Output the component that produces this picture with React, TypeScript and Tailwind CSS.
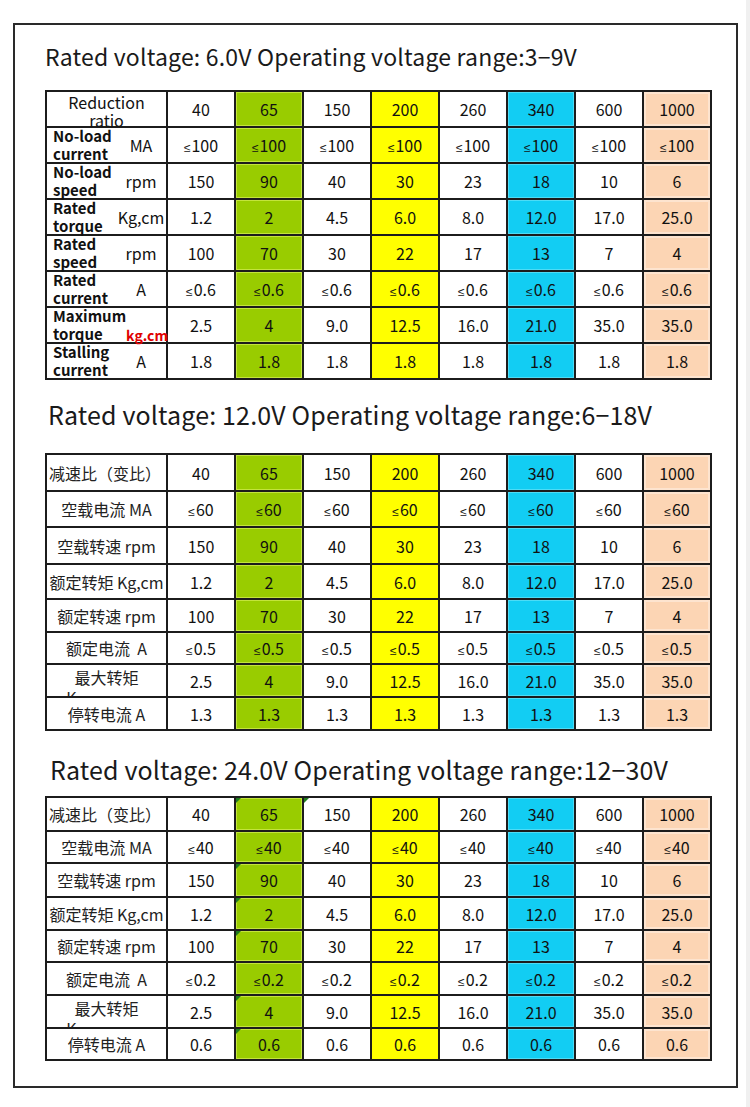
import React from "react";

const cols = ["40", "65", "150", "200", "260", "340", "600", "1000"];

// column fills, written out in full so tailwind picks them up
const colCls = [
  "bg-white",
  "bg-[#99cc00] shadow-[inset_0_0_0_1px_#c4e43c]",
  "bg-white",
  "bg-[#ffff00]",
  "bg-white",
  "bg-[#12cdf3] shadow-[inset_0_0_0_1px_#4ddcf6]",
  "bg-white",
  "bg-[#fcd5b4] shadow-[inset_0_0_0_2px_#fde4cf]",
];

const body = (cur: string, amp: string, stall: string) => [
  cols,
  Array(8).fill(cur),
  ["150", "90", "40", "30", "23", "18", "10", "6"],
  ["1.2", "2", "4.5", "6.0", "8.0", "12.0", "17.0", "25.0"],
  ["100", "70", "30", "22", "17", "13", "7", "4"],
  Array(8).fill(amp),
  ["2.5", "4", "9.0", "12.5", "16.0", "21.0", "35.0", "35.0"],
  Array(8).fill(stall),
];

// the "≤" in the picture is a small narrow glyph, not the full-width CJK one
const Val = ({ v }: { v: string }) =>
  v.startsWith("≤") ? (
    <span>
      <span className="font-['Liberation_Sans',sans-serif] text-[12px] mr-[1px]">≤</span>
      {v.slice(1)}
    </span>
  ) : (
    <span>{v}</span>
  );

const EnLabel = ({ a, b, unit, red }: { a: string; b: string; unit?: string; red?: boolean }) => (
  <div className="relative h-full flex items-center pl-[6px]">
    <div className="font-bold text-[15px] leading-[18px] text-[#111]">
      <div>{a}</div>
      <div>{b}</div>
    </div>
    {unit && !red && (
      <span className="absolute right-0 w-[50px] text-center text-[16px] text-[#111]">{unit}</span>
    )}
    {red && (
      <span className="absolute right-[-2px] bottom-[-4px] font-bold text-[14px] text-[#e00000]">kg.cm</span>
    )}
  </div>
);

const enLabels = [
  <div className="h-full flex items-start justify-center pt-[1px] text-[16px] leading-[18px] text-[#111] text-center">
    Reduction
    <br />
    ratio
  </div>,
  <EnLabel a="No-load" b="current" unit="MA" />,
  <EnLabel a="No-load" b="speed" unit="rpm" />,
  <EnLabel a="Rated" b="torque" unit="Kg,cm" />,
  <EnLabel a="Rated" b="speed" unit="rpm" />,
  <EnLabel a="Rated" b="current" unit="A" />,
  <EnLabel a="Maximum" b="torque" red />,
  <EnLabel a="Stalling" b="current" unit="A" />,
];

const cnText = ["减速比（变比）", "空载电流 MA", "空载转速 rpm", "额定转矩 Kg,cm", "额定转速 rpm", "额定电流  A", "最大转矩", "停转电流 A"];

const cnLabels = cnText.map((t, i) =>
  i === 6 ? (
    <div className="h-full overflow-hidden flex flex-col items-center pt-[2px] text-[16px] leading-[20px] text-[#222]">
      <span>{t}</span>
      <span className="pr-[70px]">K</span>
    </div>
  ) : (
    <div className={`h-full flex items-center whitespace-pre text-[16px] text-[#222] ${i === 0 ? "pl-[2px] text-[16.5px]" : "justify-center"}`}>
      {t}
    </div>
  )
);

const Table = ({ labels, rows, rowsCls, marks }: { labels: React.ReactNode[]; rows: string[][]; rowsCls: string; marks?: boolean }) => (
  <div className={`grid grid-cols-[119px_repeat(8,66px)] gap-[2px] p-[2px] bg-[#1c1c1c] w-fit ${rowsCls}`}>
    {rows.map((r, ri) => (
      <React.Fragment key={ri}>
        <div className="bg-white">{labels[ri]}</div>
        {r.map((v, ci) => (
          <div key={ci} className={`relative flex items-center justify-center text-[16px] text-[#111] ${colCls[ci]}`}>
            {marks && ((ci === 1 && ri !== 1 && ri !== 5) || (ri === 0 && ci === 2)) && (
              <span className="absolute left-0 top-0 w-0 h-0 border-t-[5px] border-r-[5px] border-t-[#1f7a1f] border-r-transparent" />
            )}
            <Val v={v} />
          </div>
        ))}
      </React.Fragment>
    ))}
  </div>
);

export default function App() {
  return (
    <div className="w-[750px] h-[1107px] bg-white pt-[23px] pl-[13px] font-['Noto_Sans_CJK_JP','Noto_Sans_CJK_SC',sans-serif] border-r-4 border-r-[#f0f0f0]">
      <div className="w-[725px] h-[1065px] border-2 border-[#2a2a2a] pl-[30px]">
        <h2 className="mt-[17px] mb-[20px] text-[23px] leading-[28px] tracking-[0.19px] text-[#1a1a1a]">
          Rated voltage: 6.0V Operating voltage range:3−9V
        </h2>
        <Table labels={enLabels} rows={body("≤100", "≤0.6", "1.8")} rowsCls="grid-rows-[repeat(8,34px)]" />

        <h2 className="mt-[19px] mb-[24px] ml-[3px] text-[25px] leading-[30px] tracking-[0.16px] text-[#1a1a1a]">
          Rated voltage: 12.0V Operating voltage range:6−18V
        </h2>
        <Table
          labels={cnLabels}
          rows={body("≤60", "≤0.5", "1.3")}
          rowsCls="grid-rows-[35px_34px_35px_33px_31px_30px_31px_31px]"
        />

        <h2 className="mt-[23px] mb-[12px] ml-[5px] text-[25px] leading-[30px] tracking-[0.16px] text-[#1a1a1a]">
          Rated voltage: 24.0V Operating voltage range:12−30V
        </h2>
        <Table
          labels={cnLabels}
          rows={body("≤40", "≤0.2", "0.6")}
          rowsCls="grid-rows-[32px_30px_32px_31px_30px_31px_31px_30px]"
          marks
        />
      </div>
    </div>
  );
}
